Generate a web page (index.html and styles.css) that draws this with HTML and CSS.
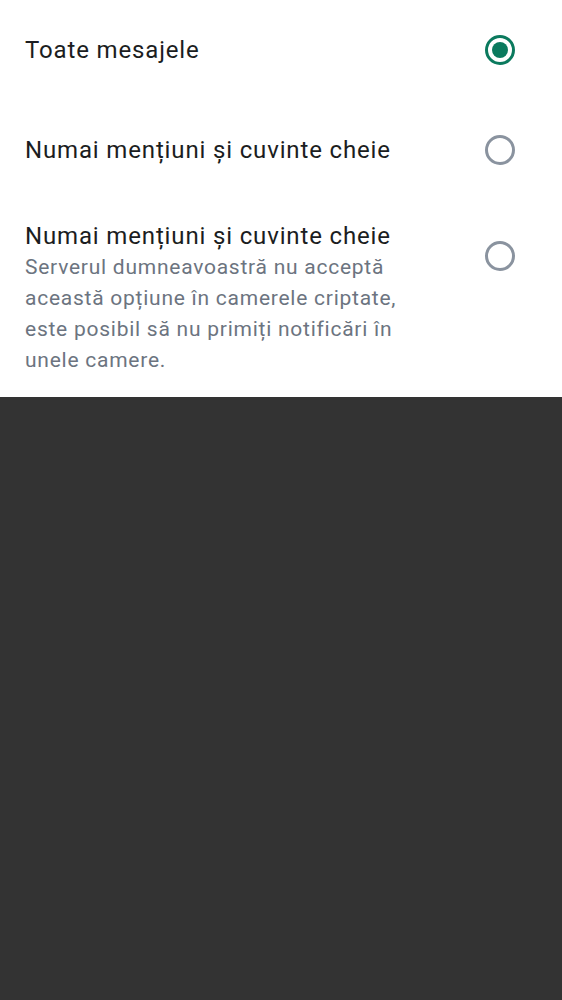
FILE: index.html
```html
<!DOCTYPE html>
<html lang="ro">
<head>
<meta charset="utf-8">
<link rel="stylesheet" href="styles.css">
</head>
<body>
<div class="list">
  <div class="row">
    <div class="text"><div class="title">Toate mesajele</div></div>
    <svg class="radio" width="32" height="32" viewBox="0 0 32 32"><circle cx="16" cy="16" r="13.5" fill="none" stroke="#0b7a5e" stroke-width="3"/><circle cx="16" cy="16" r="8" fill="#0b7a5e"/></svg>
  </div>
  <div class="row">
    <div class="text"><div class="title">Numai mențiuni și cuvinte cheie</div></div>
    <svg class="radio" width="32" height="32" viewBox="0 0 32 32"><circle cx="16" cy="16" r="13.5" fill="none" stroke="#8a939f" stroke-width="3"/></svg>
  </div>
  <div class="row row-top">
    <div class="text">
      <div class="title">Numai mențiuni și cuvinte cheie</div>
      <div class="sub">Serverul dumneavoastră nu acceptă această opțiune în camerele criptate, este posibil să nu primiți notificări în unele camere.</div>
    </div>
    <svg class="radio radio-top" width="32" height="32" viewBox="0 0 32 32"><circle cx="16" cy="16" r="13.5" fill="none" stroke="#8a939f" stroke-width="3"/></svg>
  </div>
</div>
</body>
</html>
```
FILE: styles.css
```css
html, body {
  margin: 0;
  padding: 0;
  background: #333333;
}
body {
  font-family: Roboto, "Noto Sans", sans-serif;
}
.list {
  background: #ffffff;
}
.row {
  display: flex;
  align-items: center;
  min-height: 100px;
  padding: 0 46px 0 25px;
  gap: 40px;
  box-sizing: border-box;
}
.row-top {
  align-items: flex-start;
  padding-top: 20px;
  padding-bottom: 21px;
}
.text {
  flex: 1;
  max-width: 405px;
}
.title {
  font-size: 24px;
  line-height: 32px;
  color: #1b1d21;
  letter-spacing: 0.85px;
}
.sub {
  font-size: 21px;
  line-height: 31px;
  color: #6c7480;
  letter-spacing: 0.75px;
}
.radio {
  flex: none;
  margin-left: auto;
}
.radio-top {
  margin-top: 20px;
}
```
